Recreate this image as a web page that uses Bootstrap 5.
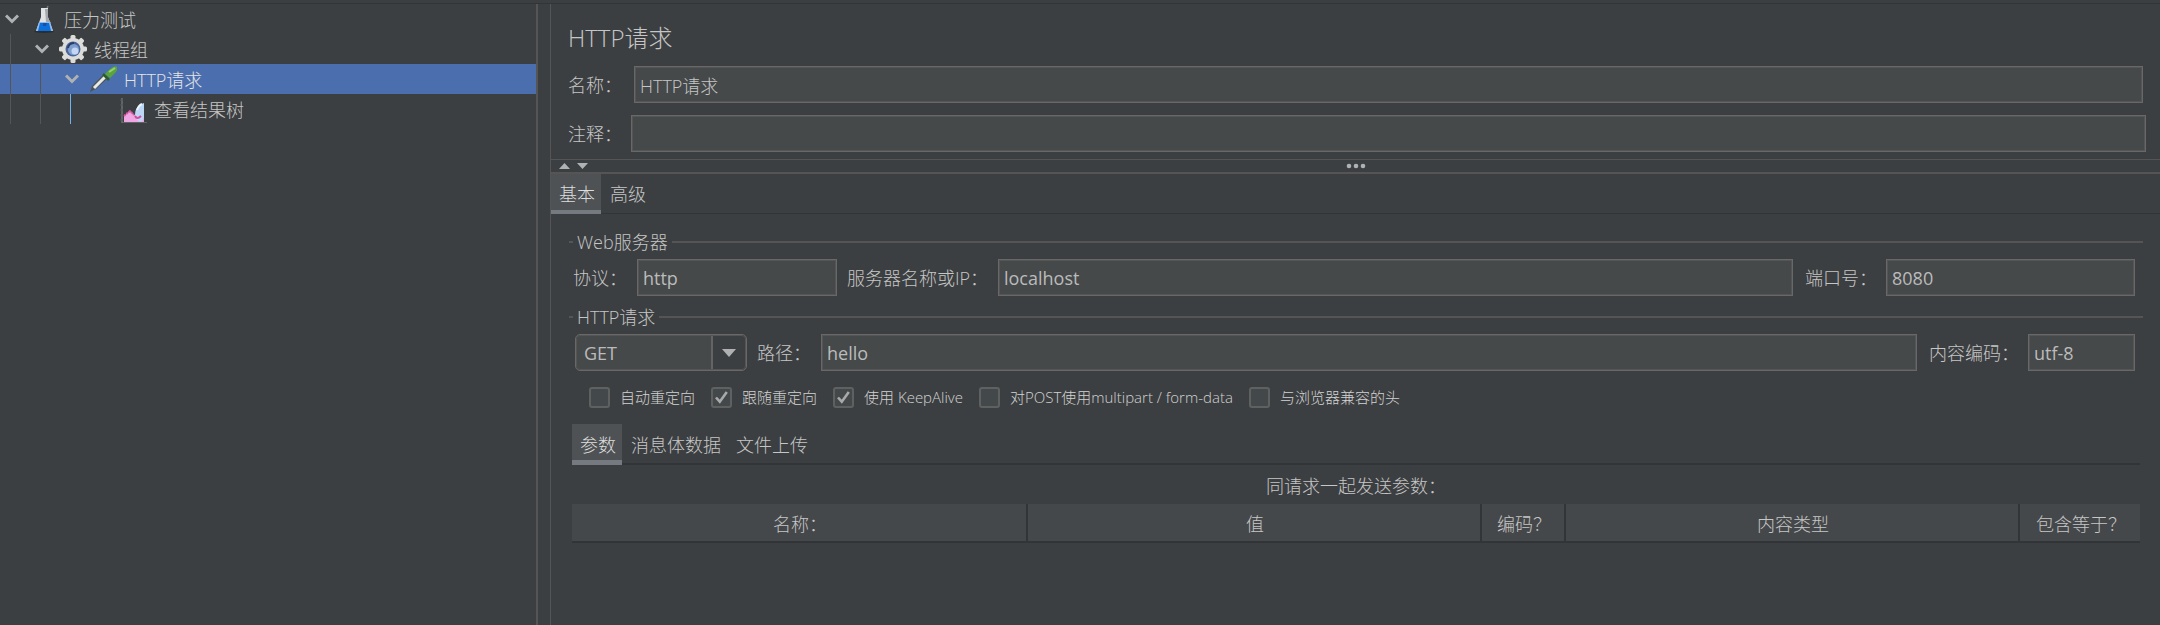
<!DOCTYPE html>
<html lang="zh-CN">
<head>
<meta charset="utf-8">
<meta name="viewport" content="width=device-width, initial-scale=1">
<title>压力测试</title>
<link href="https://cdn.jsdelivr.net/npm/bootstrap@5.3.0/dist/css/bootstrap.min.css" rel="stylesheet">
<style>
  :root { --bg:#3c3f41; --field:#45494a; --edge:#686868; --rule:#555555; --dark:#323537; --ink:#bbbbbb; --ink-light:#c6c6c6; }
  body { background:var(--bg); color:var(--ink); font:18px/24px "Open Sans","Noto Sans CJK SC",sans-serif; }
  label, .cjk { font-weight:300; color:var(--ink-light); white-space:nowrap; flex-shrink:0; }
  .app { border-top:1px solid var(--dark); margin-top:3px; min-height:calc(100vh - 3px); }

  /* test plan tree */
  .tree-pane { width:538px; border-right:2px solid var(--rule); }
  .tree-row { height:30px; color:var(--ink-light); font-weight:300; }
  .tree-row.selected { background:#4b6eaf; color:#e4e4e4; }
  .tree-text { padding:2px 0 0 2px; }
  .guide { width:30px; height:30px; padding-left:10px; }
  .guide::before { content:""; display:block; height:30px; border-left:1px solid var(--rule); }
  .guide.live::before { border-color:#6cb4f0; }
  .twisty { width:24px; height:30px; padding:0; border:0; background:none; display:flex; align-items:center; justify-content:center; }
  .tree-icon { width:28px; height:28px; margin:0 5px; }

  /* editor */
  .editor { margin-left:12px; border-left:1px solid var(--rule); min-width:0; }
  h1 { font-size:24px; line-height:36px; font-weight:300; color:var(--ink-light); margin-bottom:10px; }
  .box { height:37px; background:var(--field); border:1px solid var(--edge); outline:1px solid var(--rule); outline-offset:-2px; border-radius:0; color:var(--ink); font-size:18px; line-height:24px; padding:0 5px; min-width:0; }
  .box:focus { background:var(--field); color:var(--ink); box-shadow:none; }
  .box.thin { font-weight:300; color:var(--ink-light); }
  .head-form { padding:16px 14px 7px; }
  .head-form h1, .name-row { padding:0 3px; }
  .name-row { margin-bottom:12px; }
  .name-row label { width:66px; }
  .note-row label { width:66px; padding-left:3px; }
  .split { height:15px; border-top:1px solid var(--rule); border-bottom:2px solid var(--rule); padding-left:8px; }

  .tabs { border-bottom:1px solid var(--dark); height:40px; gap:1px; }
  .tabs button { border:0; background:none; color:var(--ink-light); font-weight:300; padding:0 6px 0 8px; }
  .tabs button.active { background:#4e5254; border-bottom:4px solid #747a80; padding-top:4px; margin-bottom:-1px; color:#dddddd; }
  .tabs.inner { height:41px; border-bottom-width:2px; }
  .tabs.inner button { padding-top:3px; }
  .tabs.inner button.active { border-bottom-width:5px; padding-top:6px; margin-bottom:-2px; }

  .body-pane { padding:16px 17px 0 18px; }
  .group-title { height:24px; font-size:18px; line-height:24px; font-weight:300; color:var(--ink-light); display:flex; align-items:center; gap:4px; margin:0; }
  .group-title::before, .group-title::after { content:""; height:2px; background:var(--rule); width:4px; }
  .group-title::after { flex:1; }

  .web-row { margin:5px 0 9px; }
  .http-row { margin:5px 0 16px; padding-left:6px; }
  .lab-a { width:64px; }
  .lab-b { width:161px; padding-left:10px; }
  .lab-c { width:93px; padding-left:12px; }
  .lab-d { width:74px; padding-left:10px; }
  .lab-e { width:111px; padding-left:12px; }
  .w-proto { width:200px; }
  .w-port { width:249px; }
  .w-enc { width:107px; }

  .combo { width:172px; height:37px; border:1px solid var(--edge); outline:1px solid var(--rule); outline-offset:-2px; border-radius:5px; color:var(--ink); padding:0 8px; appearance:none; font-size:18px;
    background:url("data:image/svg+xml,%3Csvg xmlns='http://www.w3.org/2000/svg' width='35' height='35'%3E%3Cpath fill='%233c3f41' d='M0 0h35v35H0z'/%3E%3Cpath fill='%23646464' d='M0 0h2v35H0z'/%3E%3Cpath fill='%23afb1b3' d='M11 14h14l-7 8z'/%3E%3C/svg%3E") right center no-repeat var(--field); }
  .checks { font-size:15px; line-height:21px; padding-left:20px; }
  .checks label { color:#d2d2d2; }
  .checks input { appearance:none; width:21px; height:21px; margin:0; border:2px solid #5f6161; border-radius:3px; background:#43494a; }
  .checks input:checked { background:#43494a url("data:image/svg+xml,%3Csvg xmlns='http://www.w3.org/2000/svg' viewBox='0 0 17 17'%3E%3Cpath fill='none' stroke='%23a9a9a9' stroke-width='2.6' d='M3 8.5l3.8 4.2L13.8 3'/%3E%3C/svg%3E") center/17px no-repeat; }
  .check-item { display:flex; align-items:center; gap:10px; margin-right:16px; }

  .param-pane { padding:16px 3px 0; }
  .caption-line { padding:9px 0 6px; }
  .params { table-layout:fixed; width:100%; border-collapse:separate; border-spacing:0; }
  .params th { height:39px; padding:2px 0 0 2px; text-align:center; font-weight:300; color:var(--ink-light); background:#45484a; border-bottom:2px solid var(--dark); }
  .params th + th { border-left:2px solid var(--dark); }
  .c-enc { width:84px; }
  .c-eq { width:122px; }
</style>
</head>
<body>
<main class="app d-flex">
  <nav class="tree-pane flex-shrink-0" aria-label="测试计划">
    <div class="tree-row d-flex align-items-center">
      <button class="twisty" aria-label="折叠"><svg width="14" height="10" viewBox="0 0 14 10"><path d="M1 1.500l6 6 6-6" fill="none" stroke="#afb1b3" stroke-width="3"/></svg></button>
      <svg class="tree-icon" viewBox="0 0 28 28"><ellipse cx="15" cy="26.500" rx="10" ry="1.500" fill="#2b2e30"/><path d="M17 6l2-5" stroke="#777" stroke-width="1.500"/><path d="M12 3h7v9l5 14H7l5-14z" fill="#dfe3e6"/><path d="M16 4h3v9l3 5-5-1z" fill="#a3a8ac"/><path d="M10 17h11l3 9H7z" fill="#90b9ec"/><path d="M11 18h9l2 8H9z" fill="#0b6fdc"/><path d="M14 18h4l-1 3h-3z" fill="#1d4fa0"/></svg>
      <span class="tree-text">压力测试</span>
    </div>
    <div class="tree-row d-flex align-items-center">
      <span class="guide"></span>
      <button class="twisty" aria-label="折叠"><svg width="14" height="10" viewBox="0 0 14 10"><path d="M1 1.500l6 6 6-6" fill="none" stroke="#afb1b3" stroke-width="3"/></svg></button>
      <svg class="tree-icon" viewBox="0 0 28 28"><g fill="#dcdcda"><circle cx="14" cy="14" r="11"/><g id="teeth"><rect x="11.500" y="0" width="5" height="28" rx="1.500"/><rect x="0" y="11.500" width="28" height="5" rx="1.500"/></g><use href="#teeth" transform="rotate(45 14 14)"/></g><circle cx="14" cy="14" r="7.500" fill="#4a659b"/><circle cx="14.500" cy="14.500" r="5.500" fill="#7f9fd0"/><circle cx="16" cy="16" r="3.500" fill="#c3d7f2"/><path d="M9 13a6 6 0 0 1 6-5" stroke="#2b3d62" stroke-width="2" fill="none"/></svg>
      <span class="tree-text">线程组</span>
    </div>
    <div class="tree-row selected d-flex align-items-center">
      <span class="guide"></span><span class="guide"></span>
      <button class="twisty" aria-label="折叠"><svg width="14" height="10" viewBox="0 0 14 10"><path d="M1 1.500l6 6 6-6" fill="none" stroke="#afb1b3" stroke-width="3"/></svg></button>
      <svg class="tree-icon" viewBox="0 0 28 28"><path d="M1 27l2-6L15 9l4 4L7 24z" fill="#4d5459"/><path d="M5 23L17 11" stroke="#e8eae4" stroke-width="3"/><path d="M14 9l6 6" stroke="#2e5d24" stroke-width="2.500"/><path d="M16 9l5-5q5-4 7-2 1 4-3 7l-4 4z" fill="#5aa53b"/><path d="M20 7l6-4" stroke="#9bd06e" stroke-width="2"/></svg>
      <span class="tree-text">HTTP请求</span>
    </div>
    <div class="tree-row d-flex align-items-center">
      <span class="guide"></span><span class="guide"></span><span class="guide live"></span>
      <span class="twisty"></span>
      <svg class="tree-icon" viewBox="0 0 28 28"><path d="M3 3v25h25" stroke="#6d7072" stroke-width="1.500" fill="none"/><path d="M1 5h3M1 10h3M1 15h3M1 20h3M1 25h3" stroke="#55585a"/><path d="M5 27v-6l6-5 4 4 4 1 6-2v8z" fill="#f0a6e2"/><path d="M5 21l6-5 4 4" stroke="#e157a8" stroke-width="2" fill="none" stroke-dasharray="2 1"/><path d="M16 20q0-6 4-10l5-2v14q-1 4-3 5-5-1-6-7z" fill="#bcd7f5"/><path d="M18 15q2-5 5-6" stroke="#eef6ff" stroke-width="2" fill="none"/><path d="M16 21q2 4 6 0" stroke="#d64a9a" stroke-width="2" fill="none"/></svg>
      <span class="tree-text">查看结果树</span>
    </div>
  </nav>

  <section class="editor flex-grow-1">
    <div class="head-form">
      <h1>HTTP请求</h1>
      <div class="name-row d-flex align-items-center"><label for="f-name">名称：</label><input id="f-name" class="box thin form-control flex-fill w-auto" value="HTTP请求"></div>
      <div class="note-row d-flex align-items-center"><label for="f-note">注释：</label><input id="f-note" class="box form-control flex-fill w-auto"></div>
    </div>
    <div class="split d-flex align-items-center position-relative">
      <svg width="30" height="8" viewBox="0 0 30 8" fill="#afb1b3"><path d="M0 7l5.500-6L11 7zM18 1h11l-5.500 6z"/></svg>
      <svg class="position-absolute start-50 translate-middle-x" width="20" height="6" viewBox="0 0 20 6" fill="#afb1b3"><circle cx="3" cy="3" r="2.300"/><circle cx="10" cy="3" r="2.300"/><circle cx="17" cy="3" r="2.300"/></svg>
    </div>
    <div class="tabs d-flex" role="tablist"><button class="active" role="tab">基本</button><button role="tab">高级</button></div>

    <div class="body-pane">
      <h2 class="group-title">Web服务器</h2>
      <div class="web-row d-flex align-items-center ps-1 pe-2">
        <label for="f-proto" class="lab-a">协议：</label><input id="f-proto" class="box form-control w-proto flex-shrink-0" value="http">
        <label for="f-host" class="lab-b">服务器名称或IP：</label><input id="f-host" class="box form-control flex-fill w-auto" value="localhost">
        <label for="f-port" class="lab-c">端口号：</label><input id="f-port" class="box form-control w-port flex-shrink-0" value="8080">
      </div>
      <h2 class="group-title">HTTP请求</h2>
      <div class="http-row d-flex align-items-center pe-2">
        <select id="f-method" class="combo flex-shrink-0" aria-label="方法"><option>GET</option><option>POST</option></select>
        <label for="f-path" class="lab-d">路径：</label><input id="f-path" class="box form-control flex-fill w-auto" value="hello">
        <label for="f-enc" class="lab-e">内容编码：</label><input id="f-enc" class="box form-control w-enc flex-shrink-0" value="utf-8">
      </div>
      <div class="checks d-flex align-items-center">
        <div class="check-item"><input type="checkbox" id="c1"><label for="c1">自动重定向</label></div>
        <div class="check-item"><input type="checkbox" id="c2" checked><label for="c2">跟随重定向</label></div>
        <div class="check-item"><input type="checkbox" id="c3" checked><label for="c3">使用 KeepAlive</label></div>
        <div class="check-item"><input type="checkbox" id="c4"><label for="c4">对POST使用multipart / form-data</label></div>
        <div class="check-item"><input type="checkbox" id="c5"><label for="c5">与浏览器兼容的头</label></div>
      </div>
      <div class="param-pane">
        <div class="tabs inner d-flex" role="tablist"><button class="active" role="tab">参数</button><button role="tab">消息体数据</button><button role="tab">文件上传</button></div>
        <div class="text-center cjk caption-line">同请求一起发送参数：</div>
        <table class="params">
          <colgroup><col><col><col class="c-enc"><col><col class="c-eq"></colgroup>
          <thead><tr><th>名称：</th><th>值</th><th>编码？</th><th>内容类型</th><th>包含等于？</th></tr></thead>
        </table>
      </div>
    </div>
  </section>
</main>
<script src="https://cdn.jsdelivr.net/npm/bootstrap@5.3.0/dist/js/bootstrap.bundle.min.js"></script>
</body>
</html>
